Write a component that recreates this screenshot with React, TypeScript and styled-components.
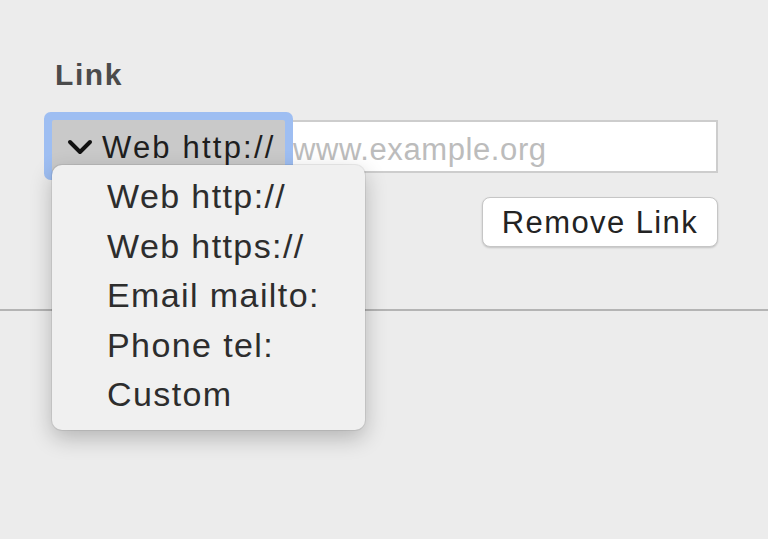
import React from "react";
import styled, { createGlobalStyle } from "styled-components";

const Global = createGlobalStyle`
  html, body { margin: 0; padding: 0; background: #ececec; }
  body { font-family: "Liberation Sans", Arial, sans-serif; }
  * { box-sizing: border-box; }
`;

const Page = styled.div`
  width: 768px;
  height: 539px;
  background: #ececec;
  overflow: hidden;
  padding-top: 57px;
`;

const Section = styled.div`
  padding: 0 50px 0 52px;
`;

const Label = styled.div`
  font-weight: bold;
  font-size: 30px;
  line-height: 36px;
  letter-spacing: 1.6px;
  color: #4b4b4b;
  padding-left: 3px;
`;

const FieldRow = styled.div`
  display: flex;
  margin-top: 27px;
  height: 53px;
`;

const SelectWrap = styled.div`
  position: relative;
  flex: 0 0 233px;
  z-index: 2;
`;

const SelectButton = styled.div`
  height: 52px;
  display: flex;
  align-items: center;
  gap: 9px;
  padding: 3px 0 0 15px;
  background: #c9c9c9;
  border-radius: 2px;
  box-shadow: 0 0 0 8px #9ebef2;
  font-size: 31px;
  letter-spacing: 2.2px;
  color: #1e1e1e;
  white-space: nowrap;
`;

const Input = styled.input`
  flex: 1;
  height: 53px;
  border: 2px solid #cdcdcd;
  border-left: none;
  background: #ffffff;
  padding: 7px 0 0 8px;
  font-family: "Liberation Sans", Arial, sans-serif;
  font-size: 31px;
  letter-spacing: 0.6px;
  outline: none;
  &::placeholder { color: #bcbcbc; }
`;

const Menu = styled.div`
  position: absolute;
  left: 0;
  top: 45px;
  width: 313px;
  height: 265px;
  padding-top: 7px;
  background: #f0f0f0;
  border-radius: 10px;
  box-shadow: 0 0 0 1px rgba(0, 0, 0, 0.07), 0 8px 22px rgba(0, 0, 0, 0.24);
`;

const MenuItem = styled.div`
  padding-left: 55px;
  font-size: 34px;
  line-height: 49.5px;
  letter-spacing: 1.4px;
  color: #2d2d2d;
  white-space: nowrap;
`;

const ButtonRow = styled.div`
  display: flex;
  justify-content: flex-end;
  margin-top: 24px;
`;

const Button = styled.button`
  width: 236px;
  height: 50px;
  background: #ffffff;
  border: 1px solid #c6c6c6;
  border-radius: 8px;
  box-shadow: 0 1px 2px rgba(0, 0, 0, 0.18);
  font-family: "Liberation Sans", Arial, sans-serif;
  font-size: 31px;
  letter-spacing: 1.4px;
  color: #232323;
  padding: 1px 0 0 0;
`;

const Divider = styled.div`
  margin-top: 62px;
  height: 2px;
  background: #b4b4b4;
`;

const Chevron = () => (
  <svg width="26" height="17" viewBox="0 0 26 17" fill="none">
    <path d="M3 3 L13 13 L23 3" stroke="#111" strokeWidth="4" strokeLinecap="round" strokeLinejoin="round" />
  </svg>
);

const options = ["Web http://", "Web https://", "Email mailto:", "Phone tel:", "Custom"];

export default function App() {
  return (
    <Page>
      <Global />
      <Section>
        <Label>Link</Label>
        <FieldRow>
          <SelectWrap>
            <SelectButton>
              <Chevron />
              <span>Web http://</span>
            </SelectButton>
            <Menu>
              {options.map((o) => (
                <MenuItem key={o}>{o}</MenuItem>
              ))}
            </Menu>
          </SelectWrap>
          <Input placeholder="www.example.org" />
        </FieldRow>
        <ButtonRow>
          <Button>Remove Link</Button>
        </ButtonRow>
      </Section>
      <Divider />
    </Page>
  );
}
